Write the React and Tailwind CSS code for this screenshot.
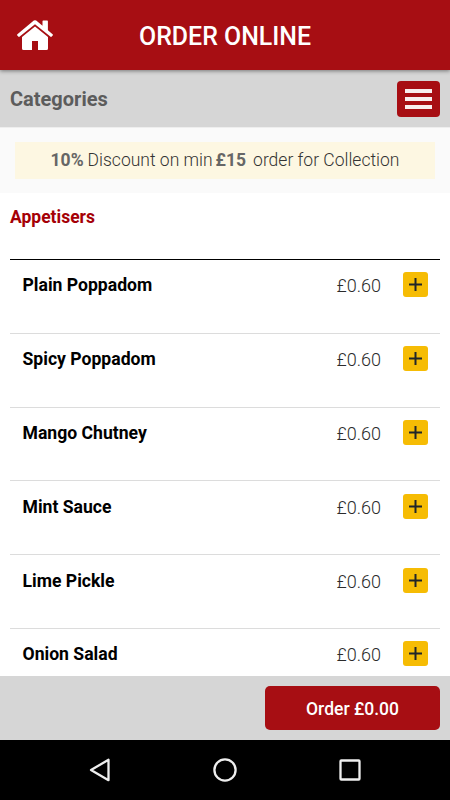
import React from "react";

const items = [
  { id: 1, name: "Plain Poppadom", price: "£0.60" },
  { id: 2, name: "Spicy Poppadom", price: "£0.60" },
  { id: 3, name: "Mango Chutney", price: "£0.60" },
  { id: 4, name: "Mint Sauce", price: "£0.60" },
  { id: 5, name: "Lime Pickle", price: "£0.60" },
  { id: 6, name: "Onion Salad", price: "£0.60" },
];

const HomeIcon = () => (
  <svg width="36" height="30" viewBox="0 0 36 30" fill="#fff">
    <path d="M18 6.4 31 17v11.5q0 1.5-1.5 1.5H21v-9h-6v9H6.500q-1.500 0-1.500-1.500V17z" />
    <path d="M16.800.6q1.200-.9 2.400 0L25.500 5.800V1.300q0-.7.700-.7h4q.7 0 .7.700v9l4.700 4q.6.500.1 1.100l-1 1.200q-.5.600-1.100.100L18 4.200 2.400 16.700q-.6.500-1.100-.1l-1-1.200q-.5-.6.100-1.100z" />
  </svg>
);

const Header = () => (
  <header className="relative z-10 grid h-[70px] shrink-0 grid-cols-[54px_1fr_54px] items-center bg-[#a70e13] shadow-[0_1px_4px_rgba(0,0,0,0.45)]">
    <button className="pl-[17px]">
      <HomeIcon />
    </button>
    <h1 className="pt-[3px] text-center text-[24.900px] leading-8 font-medium text-white">
      ORDER ONLINE
    </h1>
  </header>
);

const MenuItem = ({ item }) => (
  <li className="flex h-[73.8px] items-start border-b border-[#dcdcdc] pt-[12.400px] pr-[12.500px] pl-[12.500px]">
    <span className="flex-1 pt-px text-[17.600px] leading-[25px] font-bold text-black">
      {item.name}
    </span>
    <span className="mr-[21.500px] pt-px text-[18px] leading-[25px] font-light text-[#2b2b2b]">
      {item.price}
    </span>
    <button className="flex h-[25px] w-[25px] items-center justify-center rounded-[3px] bg-[#f6bc04]">
      <svg width="13" height="13" viewBox="0 0 13 13" stroke="#212529" strokeWidth="2">
        <path d="M6.500 0v13M0 6.500h13" />
      </svg>
    </button>
  </li>
);

const NavigationBar = () => (
  <nav className="flex h-[60px] shrink-0 items-center justify-center gap-[75px] bg-black">
    <svg width="50" height="30" viewBox="0 0 50 30" fill="none" stroke="#eee" strokeWidth="2.300">
      <path d="M33.500 4.800v20.400L16 15z" strokeLinejoin="round" />
    </svg>
    <svg width="50" height="30" viewBox="0 0 50 30" fill="none" stroke="#eee" strokeWidth="2.300">
      <circle cx="25" cy="15" r="10.600" />
    </svg>
    <svg width="50" height="30" viewBox="0 0 50 30" fill="none" stroke="#eee" strokeWidth="2.300">
      <rect x="15.500" y="5.500" width="19" height="19" rx="0.800" />
    </svg>
  </nav>
);

const App = () => {
  return (
    <div className="flex h-screen w-full flex-col overflow-hidden bg-white font-['Roboto',sans-serif]">
      <Header />

      {/* Categories */}
      <div className="flex h-[57px] shrink-0 items-center justify-between bg-[#d6d6d6] px-[10px]">
        <h2 className="text-[20px] font-bold text-[#5c5c5c]">Categories</h2>
        <button className="mt-px flex h-9 w-[43px] flex-col items-center justify-center gap-1 rounded-[4px] bg-[#a70e13]">
          <span className="h-1 w-[27px] bg-[#f8eeee]" />
          <span className="h-1 w-[27px] bg-[#f8eeee]" />
          <span className="h-1 w-[27px] bg-[#f8eeee]" />
        </button>
      </div>

      {/* Discount */}
      <div className="h-[66px] shrink-0 border-t border-[#eee] bg-[#fafafa] px-[15px] pt-[14px]">
        <p className="flex h-[37px] justify-center bg-[#fdf7e2] text-[17.500px] leading-[37px] font-light text-[#333]">
          <strong className="mr-1 font-bold text-[#666]">10%</strong>
          Discount on min
          <strong className="mr-[7px] ml-[3px] font-bold text-[#666]">£15</strong>
          order for Collection
        </p>
      </div>

      {/* Menu list */}
      <main className="min-h-0 flex-1 overflow-hidden px-[10px]">
        <h3 className="h-[67px] border-b border-black pt-3 text-[17.500px] leading-6 font-bold text-[#a50006]">
          Appetisers
        </h3>
        <ul>
          {items.map((item) => (
            <MenuItem key={item.id} item={item} />
          ))}
        </ul>
      </main>

      {/* Order total */}
      <div className="flex h-16 shrink-0 items-center justify-end bg-[#d6d6d6] px-[10px]">
        <button className="h-11 w-[175px] rounded-[5px] bg-[#a70e13] pt-[2px] text-[17.500px] font-medium text-white">
          Order £0.00
        </button>
      </div>

      <NavigationBar />
    </div>
  );
};

export default App;
